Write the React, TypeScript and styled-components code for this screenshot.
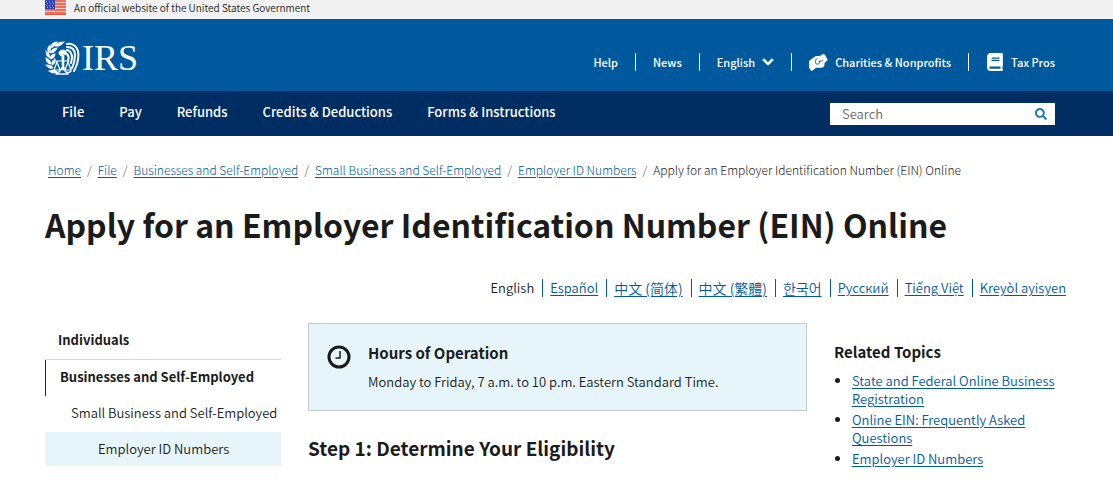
import React from "react";
import styled, { createGlobalStyle } from "styled-components";
import { FaBook, FaChevronDown, FaSearch } from "react-icons/fa";

const colors = {
  ink: "#1b1b1b",
  link: "#00599c",
  header: "#00599c",
  navy: "#002d62",
  pale: "#e6f5f9",
  rule: "#d6d7d9",
};

const GlobalStyle = createGlobalStyle`
  *, *::before, *::after { box-sizing: border-box; }
  body {
    margin: 0;
    background: #fff;
    color: ${colors.ink};
    font-family: "Noto Sans CJK SC", "Noto Sans CJK KR", "Noto Sans", sans-serif;
    font-size: 13px;
    font-weight: 350;
    line-height: 18px;
  }
`;

const Banner = styled.div`
  display: flex;
  align-items: center;
  gap: 8px;
  height: 19px;
  padding: 0 45px 4px;
  background: #f1f1f1;
  font-size: 10px;
  line-height: 14px;
`;

const Masthead = styled.header`
  display: flex;
  align-items: center;
  justify-content: space-between;
  min-height: 72px;
  padding: 6px 58px 0 45px;
  background: ${colors.header};
  color: #fff;
`;

const Brand = styled.a`
  display: flex;
  align-items: center;
  gap: 2px;
  color: #fff;
  text-decoration: none;
`;

const BrandName = styled.span`
  font-family: "Liberation Serif", serif;
  font-size: 36px;
  font-weight: 400;
  line-height: 36px;
`;

const Utility = styled.ul`
  display: flex;
  margin: 8px 0 0;
  padding: 0;
  list-style: none;
`;

const UtilityItem = styled.li`
  display: flex;
  align-items: center;
  height: 18px;
  padding: 0 17px;
  border-left: 1px solid #fff;
  font-size: 11px;
  font-weight: 500;
  &:first-child { border-left: 0; }
  &:last-child { padding-right: 0; }
`;

const UtilityLink = styled.a`
  display: flex;
  align-items: center;
  gap: 7px;
  color: #fff;
  text-decoration: none;
`;

const LanguageButton = styled.button`
  display: flex;
  align-items: center;
  gap: 7px;
  padding: 0;
  border: 0;
  background: none;
  color: #fff;
  font: inherit;
`;

const Chevron = styled(FaChevronDown)`
  stroke: #fff;
  stroke-width: 40px;
`;

const NavBar = styled.div`
  display: flex;
  align-items: center;
  justify-content: space-between;
  min-height: 45px;
  padding: 0 58px 0 62px;
  background: ${colors.navy};
`;

const MainNav = styled.nav`
  display: flex;
  gap: 35px;
  padding-bottom: 3px;
`;

const NavLink = styled.a`
  color: #fff;
  font-weight: 500;
  text-decoration: none;
`;

const SearchForm = styled.form`
  display: flex;
  align-items: center;
  width: 225px;
  height: 22px;
  background: #fff;
`;

const SearchInput = styled.input`
  flex: 1;
  min-width: 0;
  height: 22px;
  padding: 0 12px;
  border: 0;
  background: none;
  color: ${colors.ink};
  font: inherit;
  &::placeholder { color: #666; opacity: 1; }
`;

const SearchButton = styled.button`
  display: flex;
  padding: 0 8px;
  border: 0;
  background: none;
  color: #1a75bb;
`;

const Page = styled.div`
  padding: 0 45px;
`;

const Crumbs = styled.ol`
  display: flex;
  flex-wrap: wrap;
  margin: 0;
  padding: 25px 3px 0;
  list-style: none;
  font-size: 12px;
  font-weight: 300;
`;

const Crumb = styled.li`
  & + &::before {
    content: "/";
    padding: 0 6px;
    color: #555;
  }
`;

const TextLink = styled.a`
  color: ${colors.link};
  text-decoration: underline;
  text-underline-offset: 2px;
`;

const Title = styled.h1`
  margin: 23px 0 0;
  font-size: 32px;
  line-height: 44px;
  font-weight: 700;
`;

const Languages = styled.ul`
  display: flex;
  flex-wrap: wrap;
  justify-content: flex-end;
  margin: 33px 2px 0 0;
  padding: 0;
  list-style: none;
`;

const Language = styled.li<{ $cjk?: boolean }>`
  padding: 0 8px 0 7px;
  border-left: 1px solid ${colors.link};
  ${({ $cjk }) => $cjk && "font-size: 14px;"}
  &:first-child { border-left: 0; }
  &:last-child { padding-right: 0; }
`;

const Columns = styled.div`
  display: grid;
  grid-template-columns: 236fr 499fr 234fr;
  gap: 27px;
  margin-top: 26px;
`;

const SideNav = styled.nav`
  display: flex;
  flex-direction: column;
`;

const SideLink = styled.a<{ $kind: "top" | "section" | "child" | "current" }>`
  display: block;
  color: ${colors.ink};
  text-decoration: none;
  white-space: nowrap;
  line-height: 18px;
  ${({ $kind }) =>
    ({
      top: `padding: 8px 13px 10px; border-bottom: 1px solid ${colors.rule}; font-weight: 700;`,
      section: `padding: 8px 14px 10px; border-left: 1px solid ${colors.navy}; font-weight: 700;`,
      child: `padding: 8px 0 10px 26px;`,
      current: `padding: 8px 0 8px 53px; background: ${colors.pale};`,
    })[$kind]}
`;

const Notice = styled.section`
  display: flex;
  gap: 17px;
  min-height: 88px;
  padding: 19px 18px 18px;
  border: 1px solid #c6cace;
  background: ${colors.pale};
`;

const NoticeText = styled.p`
  margin: 10px 0 0;
`;

const SmallHeading = styled.h2`
  margin: 0;
  font-size: 15px;
  line-height: 20px;
  font-weight: 700;
`;

const StepHeading = styled.h2`
  margin: 23px 0 0;
  font-size: 19px;
  line-height: 28px;
  font-weight: 700;
`;

const Related = styled.aside`
  padding-top: 19px;
`;

const TopicList = styled.ul`
  margin: 10px 0 0;
  padding: 0 0 0 18px;
`;

const Topic = styled.li`
  margin-bottom: 3px;
`;

const Flag = () => (
  <svg width="21" height="15" viewBox="0 0 21 15" role="img" aria-label="U.S. flag">
    <rect width="21" height="15" fill="#f6c4ba" />
    {[0, 3, 6, 9, 12].map((y) => (
      <rect key={y} y={y} width="21" height="2" fill="#e8705a" />
    ))}
    <rect y="14" width="21" height="1" fill="#e05a44" />
    <rect width="10" height="9" fill="#2a41b8" />
    {[1, 3, 5, 7].map((y) =>
      [1, 4, 7].map((x) => (
        <rect key={`${x}-${y}`} x={x + (y % 4 === 3 ? 1 : 0)} y={y} width="1" height="1" fill="#b6bff0" />
      ))
    )}
  </svg>
);

const Eagle = () => (
  <svg width="35" height="34" viewBox="0 0 35 34" fill="none" stroke="#fff" strokeLinecap="round" aria-hidden="true">
    <g fill="#fff" strokeWidth="0.6">
      <path d="M19 1C14 1 11 2 10 5c4 1 7-1 9-4z" />
      <path d="M12 1C8 1 6 3 6 7c3-1 5-3 6-6z" />
      <path d="M5 4C2 7 2 9 4 12c2-3 2-5 1-8z" />
      <path d="M12 7c-4 0-6 2-7 5 4 0 6-2 7-5z" />
      <path d="M1 10c0 4 1 6 4 7 0-3-1-5-4-7z" />
      <path d="M10 13c-3 0-5 2-5 5 3 0 5-2 5-5z" />
      <path d="M1 17c0 4 2 6 5 6 0-3-2-5-5-6z" />
      <path d="M10 18c-2 1-4 3-3 6 3-1 4-3 3-6z" />
      <path d="M1 24c2 3 4 4 7 3-1-3-4-3-7-3z" />
      <path d="M4 30c2 2 5 3 8 1-2-3-5-2-8-1z" />
      <path d="M14 12c0-3 4-4 7-2l1 4-4-1-2 2c-1-1-2-1-2-3z" />
      <path d="M17 14h2v12l2 3h-6l2-3z" />
    </g>
    <path d="M11 20h13M12 21l-3 8h6zM23 21l-3 8h6z" strokeWidth="1.2" />
    <path d="M9 30c1 2 5 2 6 0M20 30c1 2 5 2 6 0M11 33h12" strokeWidth="1.6" />
    <path d="M22 3c5-1 10 2 11 7 1 6 0 13-4 20M22 6c5 0 8 3 8 8 0 5-1 9-3 13M22 9c4 1 5 4 5 8l-1 5M22 13c2 2 2 4 1 6" strokeWidth="2" />
  </svg>
);

const Hands = () => (
  <svg width="19" height="18" viewBox="0 0 19 18" aria-hidden="true">
    <path
      d="M0 8L5 4.200C6 3.500 7 3 8.500 3h2L14 1.200c.8-.4 1.400-.2 1.800.4L18.800 7l-3.300 3v1.500c0 2-1.500 3.300-3.500 3.300H7L3.200 17.800c-.5.300-1 .2-1.300-.2L0 14.500z"
      fill="#fff"
    />
    <path
      d="M8.500 5.500C7 6 6.500 7 6.500 8.500v1c0 2.200 3.800 2.200 3.800 0V8c1.500.3 3 0 4-.7"
      fill="none"
      stroke={colors.header}
      strokeWidth="1"
    />
  </svg>
);

const Clock = () => (
  <svg width="24" height="24" viewBox="0 0 24 24" fill="none" stroke={colors.ink} aria-hidden="true">
    <circle cx="12" cy="12" r="10" strokeWidth="3" />
    <path d="M13 6v7H8.500" strokeWidth="1.500" />
  </svg>
);

const NoticeIcon = styled.span`
  display: flex;
  padding-top: 2px;
`;

const navItems = ["File", "Pay", "Refunds", "Credits & Deductions", "Forms & Instructions"];
const crumbs = ["Home", "File", "Businesses and Self-Employed", "Small Business and Self-Employed", "Employer ID Numbers"];
const languages = [
  { code: "es", name: "Español" },
  { code: "zh-Hans", name: "中文 (简体)", cjk: true },
  { code: "zh-Hant", name: "中文 (繁體)", cjk: true },
  { code: "ko", name: "한국어", cjk: true },
  { code: "ru", name: "Русский" },
  { code: "vi", name: "Tiếng Việt" },
  { code: "ht", name: "Kreyòl ayisyen" },
];
const topics = [
  "State and Federal Online Business Registration",
  "Online EIN: Frequently Asked Questions",
  "Employer ID Numbers",
];

export default function App() {
  return (
    <>
      <GlobalStyle />
      <Banner>
        <Flag />
        <span>An official website of the United States Government</span>
      </Banner>
      <Masthead>
        <Brand href="#" aria-label="IRS home">
          <Eagle />
          <BrandName>IRS</BrandName>
        </Brand>
        <Utility>
          <UtilityItem><UtilityLink href="#">Help</UtilityLink></UtilityItem>
          <UtilityItem><UtilityLink href="#">News</UtilityLink></UtilityItem>
          <UtilityItem>
            <LanguageButton type="button">English <Chevron size={12} /></LanguageButton>
          </UtilityItem>
          <UtilityItem>
            <UtilityLink href="#"><Hands />Charities &amp; Nonprofits</UtilityLink>
          </UtilityItem>
          <UtilityItem>
            <UtilityLink href="#"><FaBook size={18} />Tax Pros</UtilityLink>
          </UtilityItem>
        </Utility>
      </Masthead>
      <NavBar>
        <MainNav aria-label="Main">
          {navItems.map((item) => <NavLink key={item} href="#">{item}</NavLink>)}
        </MainNav>
        <SearchForm role="search">
          <SearchInput type="text" placeholder="Search" aria-label="Search" />
          <SearchButton type="button" aria-label="Submit search"><FaSearch size={12} /></SearchButton>
        </SearchForm>
      </NavBar>
      <Page>
        <nav aria-label="Breadcrumb">
          <Crumbs>
            {crumbs.map((c) => <Crumb key={c}><TextLink href="#">{c}</TextLink></Crumb>)}
            <Crumb aria-current="page">Apply for an Employer Identification Number (EIN) Online</Crumb>
          </Crumbs>
        </nav>
        <Title>Apply for an Employer Identification Number (EIN) Online</Title>
        <Languages>
          <Language>English</Language>
          {languages.map(({ code, name, cjk }) => (
            <Language key={code} $cjk={cjk}><TextLink href="#" lang={code}>{name}</TextLink></Language>
          ))}
        </Languages>
        <Columns>
          <SideNav aria-label="Section">
            <SideLink href="#" $kind="top">Individuals</SideLink>
            <SideLink href="#" $kind="section">Businesses and Self-Employed</SideLink>
            <SideLink href="#" $kind="child">Small Business and Self-Employed</SideLink>
            <SideLink href="#" $kind="current" aria-current="page">Employer ID Numbers</SideLink>
          </SideNav>
          <main>
            <Notice>
              <NoticeIcon><Clock /></NoticeIcon>
              <div>
                <SmallHeading>Hours of Operation</SmallHeading>
                <NoticeText>Monday to Friday, 7 a.m. to 10 p.m. Eastern Standard Time.</NoticeText>
              </div>
            </Notice>
            <StepHeading>Step 1: Determine Your Eligibility</StepHeading>
          </main>
          <Related>
            <SmallHeading>Related Topics</SmallHeading>
            <TopicList>
              {topics.map((t) => <Topic key={t}><TextLink href="#">{t}</TextLink></Topic>)}
            </TopicList>
          </Related>
        </Columns>
      </Page>
    </>
  );
}
